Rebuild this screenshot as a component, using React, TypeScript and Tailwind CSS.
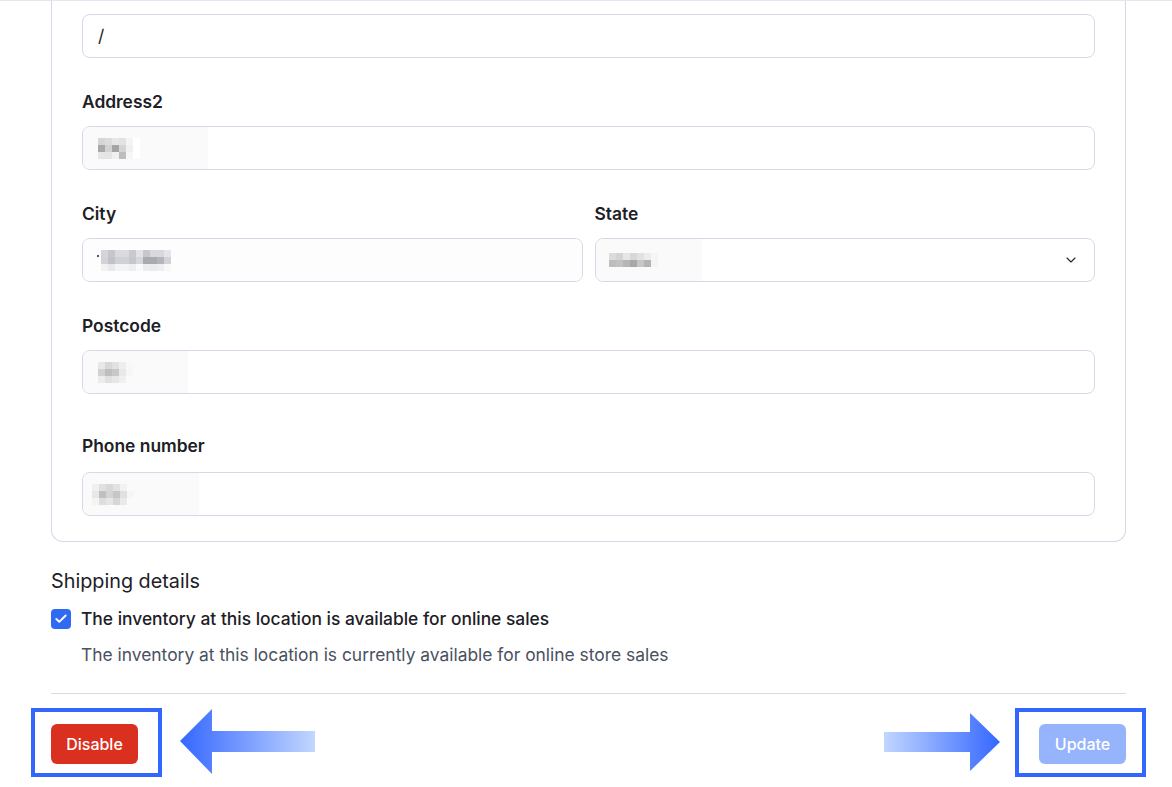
import { ChevronDown, Check } from 'lucide-react';

type Cells = string[][];

function Pixels({ cells, size = 7 }: { cells: Cells; size?: number }) {
  return (
    <div className="flex flex-col">
      {cells.map((row, i) => (
        <div key={i} className="flex">
          {row.map((c, j) => (
            <div key={j} style={{ width: size, height: size, background: c }} />
          ))}
        </div>
      ))}
    </div>
  );
}

const addr2: Cells = [
  ['#d6d6d6', '#dcdcdc', '#e6e6e6', '#e2e2e2', '#f4f4f4', '#ffffff'],
  ['#a9a9a9', '#d2d2d2', '#a4a4a4', '#d4d4d4', '#f0f0f0', '#ffffff'],
  ['#e6e6e6', '#e4e4e4', '#f0f0f0', '#bdbdbd', '#f6f6f6', '#ffffff'],
];
const city: Cells = [
  ['#d4d5da', '#c6c7cd', '#dadbe0', '#dadbe0', '#c9cad0', '#e2e3e7', '#c7c8ce', '#d8d9de', '#d8d9de', '#e4e5e8'],
  ['#d2d3d8', '#c1c2c8', '#d0d1d6', '#d0d1d6', '#c6c7cd', '#d6d7dc', '#a9aab1', '#a9aab1', '#b4b5bb', '#d2d3d8'],
  ['#f2f2f4', '#e8e9ec', '#f4f4f6', '#f4f4f6', '#eeeef1', '#fafafb', '#ededf0', '#eaebee', '#eeeef1', '#f8f8f9'],
];
const state: Cells = [
  ['#dcdcdc', '#d4d4d4', '#e6e6e6', '#d8d8d8', '#e2e2e2', '#ececec', '#f6f6f6'],
  ['#bdbdbd', '#c2c2c2', '#b6b6b6', '#a8a8a8', '#c6c6c6', '#b4b4b4', '#f4f4f4'],
];
const postcode: Cells = [
  ['#e8e8e8', '#d8d8d8', '#e2e2e2', '#eeeeee', '#f8f8f8'],
  ['#d2d2d2', '#bebebe', '#c8c8c8', '#e8e8e8', '#f6f6f6'],
  ['#ececec', '#e0e0e0', '#e6e6e6', '#f0f0f0', '#fafafa'],
];
const phone: Cells = [
  ['#f0f0f0', '#e0e0e0', '#d8d8d8', '#e2e2e2', '#f2f2f2', '#fafafa'],
  ['#e8e8e8', '#bfbfbf', '#d4d4d4', '#c6c6c6', '#e0e0e0', '#f6f6f6'],
  ['#f4f4f4', '#dedede', '#e6e6e6', '#d6d6d6', '#eaeaea', '#fafafa'],
];

function Field({
  label,
  children,
  gap = 'mb-3',
}: {
  label: string;
  children: React.ReactNode;
  gap?: string;
}) {
  return (
    <div className="flex flex-col">
      <label className={`text-[17.4px] leading-6 font-semibold text-[#1d2026] ${gap}`}>{label}</label>
      {children}
    </div>
  );
}

function Box({ children, className = '' }: { children?: React.ReactNode; className?: string }) {
  return (
    <div
      className={`h-[44px] rounded-[8px] border border-[#d6d8e8] bg-white flex items-center overflow-hidden ${className}`}
    >
      {children}
    </div>
  );
}

function ArrowLeft() {
  return (
    <svg width="135" height="66" viewBox="0 0 135 66">
      <defs>
        <linearGradient id="gl" x1="0" x2="1" y1="0" y2="0">
          <stop offset="0" stopColor="#3467ff" />
          <stop offset="1" stopColor="#c2d6ff" />
        </linearGradient>
      </defs>
      <polygon points="0,32 32,0 32,22 135,22 135,43 32,43 32,65" fill="url(#gl)" />
    </svg>
  );
}

function ArrowRight() {
  return (
    <svg width="116" height="58" viewBox="0 0 116 58">
      <defs>
        <linearGradient id="gr" x1="0" x2="1" y1="0" y2="0">
          <stop offset="0" stopColor="#c2d6ff" />
          <stop offset="1" stopColor="#3467ff" />
        </linearGradient>
      </defs>
      <polygon points="0,19 86,19 86,0 116,29 86,58 86,39 0,39" fill="url(#gr)" />
    </svg>
  );
}

export default function App() {
  return (
    <div
      className="relative w-[1172px] h-[787px] overflow-hidden bg-white border-t border-[#e4e6ee]"
      style={{ fontFamily: 'Inter, "Noto Sans", sans-serif' }}
    >
      <div className="pl-[51px] pr-[46px]">
        <div className="border border-t-0 border-[#d6d8e6] rounded-b-[12px] px-[30px] pt-[13px] pb-[25px] flex flex-col gap-8">
          <Box>
            <span className="pl-[15px] text-[17.4px] text-[#1d2026]">/</span>
          </Box>

          <Field label="Address2">
            <Box>
              <div className="h-full w-[125px] bg-[#fafafa] flex items-center pl-[15px]">
                <Pixels cells={addr2} />
              </div>
            </Box>
          </Field>

          <div className="grid grid-cols-2 gap-3">
            <Field label="City">
              <Box>
                <div className="h-full w-full bg-[#fdfdfe] flex items-center pl-[14px] gap-[2px]">
                  <span className="w-[2px] h-[2px] bg-[#555] -mt-[8px]" />
                  <Pixels cells={city} />
                </div>
              </Box>
            </Field>
            <Field label="State">
              <Box className="justify-between pr-[15px]">
                <div className="h-full w-[106px] bg-[#fafafa] flex items-center pl-[13px]">
                  <Pixels cells={state} />
                </div>
                <ChevronDown size={16} strokeWidth={1.75} className="text-[#2a2d34]" />
              </Box>
            </Field>
          </div>

          <Field label="Postcode">
            <Box>
              <div className="h-full w-[105px] bg-[#fafafa] flex items-center pl-[15px]">
                <Pixels cells={postcode} />
              </div>
            </Box>
          </Field>

          <div className="pt-2">
            <Field label="Phone number" gap="mb-[14px]">
              <Box>
                <div className="h-full w-[116px] bg-[#fafafa] flex items-center pl-[9px]">
                  <Pixels cells={phone} />
                </div>
              </Box>
            </Field>
          </div>
        </div>

        <div className="mt-[25px]">
          <h2 className="text-[19.8px] leading-7 text-[#1d2026]">Shipping details</h2>
          <div className="mt-3 flex items-center gap-[10px]">
            <div className="w-5 h-5 rounded-[4px] bg-[#2f6bf2] flex items-center justify-center">
              <Check size={14} strokeWidth={3.25} className="text-white" />
            </div>
            <span className="text-[17.4px] leading-6 font-medium text-[#1d2026]">
              The inventory at this location is available for online sales
            </span>
          </div>
          <p className="mt-3 pl-[30px] text-[17.4px] leading-6 text-[#4a5160]">
            The inventory at this location is currently available for online store sales
          </p>
        </div>

        <div className="mt-[26px] border-t border-[#d9dae4] pt-[30px] flex justify-between">
          <button className="h-10 w-[87px] rounded-[6px] bg-[#da3020] text-white text-[16px] font-medium">
            Disable
          </button>
          <button className="h-10 w-[87px] rounded-[6px] bg-[#95b4fb] text-white text-[16px] font-medium">
            Update
          </button>
        </div>
      </div>

      {/* annotations */}
      <div className="absolute left-[31px] top-[707px] w-[131px] h-[69px] border-4 border-[#3366ff]" />
      <div className="absolute left-[1015px] top-[707px] w-[131px] h-[69px] border-4 border-[#3366ff]" />
      <div className="absolute left-[180px] top-[708px]">
        <ArrowLeft />
      </div>
      <div className="absolute left-[884px] top-[712px]">
        <ArrowRight />
      </div>
    </div>
  );
}
